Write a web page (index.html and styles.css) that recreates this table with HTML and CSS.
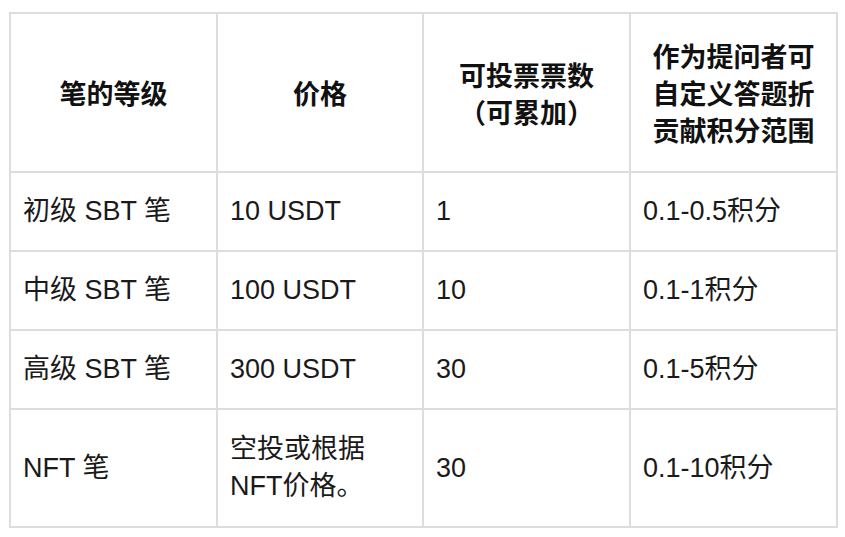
FILE: index.html
```html
<!DOCTYPE html>
<html lang="zh-CN">
<head>
<meta charset="utf-8">
<title>笔的等级</title>
<link rel="stylesheet" href="styles.css">
</head>
<body>
<table class="grid">
  <colgroup>
    <col class="c1"><col class="c2"><col class="c3"><col class="c4">
  </colgroup>
  <thead>
    <tr class="head">
      <th>笔的等级</th>
      <th>价格</th>
      <th>可投票票数<br>（可累加）</th>
      <th>作为提问者可<br>自定义答题折<br>贡献积分范围</th>
    </tr>
  </thead>
  <tbody>
    <tr class="row">
      <td>初级 SBT 笔</td>
      <td>10 USDT</td>
      <td>1</td>
      <td>0.1-0.5积分</td>
    </tr>
    <tr class="row">
      <td>中级 SBT 笔</td>
      <td>100 USDT</td>
      <td>10</td>
      <td>0.1-1积分</td>
    </tr>
    <tr class="row">
      <td>高级 SBT 笔</td>
      <td>300 USDT</td>
      <td>30</td>
      <td>0.1-5积分</td>
    </tr>
    <tr class="row tall">
      <td>NFT 笔</td>
      <td>空投或根据<br>NFT价格。</td>
      <td>30</td>
      <td>0.1-10积分</td>
    </tr>
  </tbody>
</table>
</body>
</html>
```

FILE: styles.css
```css
html, body {
  margin: 0;
  padding: 0;
  background: #ffffff;
}

body {
  font-family: "Liberation Sans", "Noto Sans CJK SC", sans-serif;
  color: #1a1a1a;
}

.grid {
  margin: 12px 0 0 9px;
  width: 827px;
  table-layout: fixed;
  border-collapse: collapse;
  font-size: 27px;
  line-height: 37px;
}

.c1 { width: 207px; }
.c2 { width: 206px; }
.c3 { width: 207px; }
.c4 { width: 207px; }

.grid th,
.grid td {
  border: 2px solid #dddddd;
  padding: 0 12px;
  vertical-align: middle;
}

.grid th {
  font-family: "Noto Sans CJK SC", "Liberation Sans", sans-serif;
  font-weight: 700;
  text-align: center;
  color: #111111;
}

.grid td {
  text-align: left;
}

.head { height: 159px; }
.row { height: 79px; }
.row.tall { height: 118px; }
```
